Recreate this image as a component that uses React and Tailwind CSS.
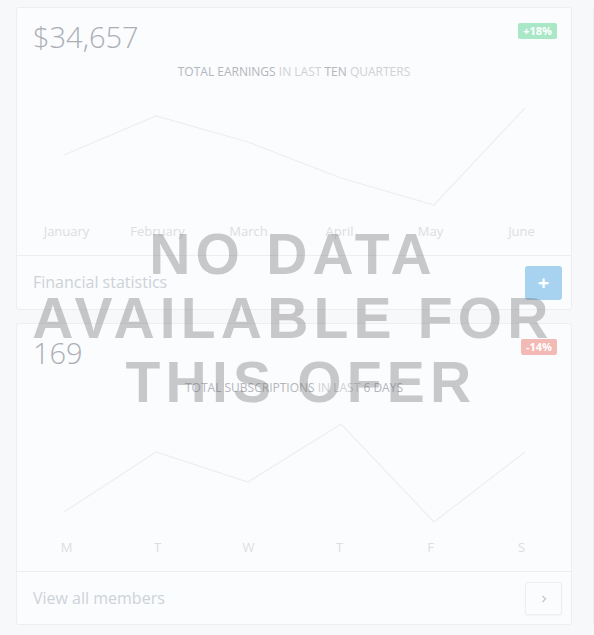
import React from 'react';

const earnings = {
  value: '$34,657',
  badge: '+18%',
  badgeClass: 'bg-[#a9e7c7]',
  labels: ['January', 'February', 'March', 'April', 'May', 'June'],
  points: [75, 36, 62, 98, 125, 28],
};

const subscriptions = {
  value: '169',
  badge: '-14%',
  badgeClass: 'bg-[#f3b9b4]',
  labels: ['M', 'T', 'W', 'T', 'F', 'S'],
  points: [116, 56, 86, 28, 126, 56],
};

const XS = [47, 139, 231, 324, 417, 508];

function LineChart({ points }) {
  const d = points.map((y, i) => `${XS[i]},${y}`).join(' ');
  return (
    <svg width="554" height="141" viewBox="0 0 554 141" className="block">
      <polyline points={d} fill="none" stroke="#eceef0" strokeWidth="1.2" />
    </svg>
  );
}

function StatCard({ data, title, footer, action }) {
  return (
    <div className="w-[556px] shrink-0 rounded-[3px] border border-[#eceef1] bg-[#fbfcfd]">
      {/* value + badge */}
      <div className="flex items-start justify-between pl-4 pr-[14px] pt-[11px]">
        <span className="text-[29px] leading-[35px] font-light text-[#abafb5]">{data.value}</span>
        <span className={`mt-[4px] rounded-[2px] px-[5px] text-[11px] font-bold leading-[16px] text-white ${data.badgeClass}`}>
          {data.badge}
        </span>
      </div>

      <div className="mt-[10px] text-center text-[12px] leading-[16px] uppercase">{title}</div>

      <LineChart points={data.points} />

      <div className="grid grid-cols-6 px-1 pb-[14px] text-center text-[13px] leading-[20px] text-[#dcdee1]">
        {data.labels.map((l, i) => (
          <span key={i}>{l}</span>
        ))}
      </div>

      <div className="flex items-center justify-between border-t border-[#eceef1] pl-4 pr-[9px] pt-[10px] pb-[9px]">
        <span className="-mt-[2px] text-[16px] text-[#cdd2d8]">{footer}</span>
        {action}
      </div>
    </div>
  );
}

export default function App() {
  return (
    <div className="relative h-[635px] w-[594px] overflow-hidden bg-[#f7f8fa] font-['Open_Sans',sans-serif]">
      <div className="flex pl-4 pt-[7px]">
        <div className="flex flex-col gap-[13px]">
          <StatCard
            data={earnings}
            title={
              <>
                <span className="text-[#b3b6bb]">Total earnings</span>{' '}
                <span className="text-[#d0d2d5]">in last</span>{' '}
                <span className="text-[#b3b6bb]">ten</span>{' '}
                <span className="text-[#d0d2d5]">quarters</span>
              </>
            }
            footer="Financial statistics"
            action={
              <button className="flex h-[34px] w-[37px] items-center justify-center rounded-[3px] bg-[#a8d3f0] text-[20px] font-bold leading-none text-white">
                +
              </button>
            }
          />
          <StatCard
            data={subscriptions}
            title={
              <>
                <span className="text-[#b3b6bb]">Total subscriptions</span>{' '}
                <span className="text-[#d0d2d5]">in last</span>{' '}
                <span className="text-[#b3b6bb]">6 days</span>
              </>
            }
            footer="View all members"
            action={
              <button className="flex h-[33px] w-[37px] items-center justify-center rounded-[3px] border border-[#eceef1] bg-[#fbfcfd] shadow-[0_1px_2px_rgba(0,0,0,0.04)]">
                <svg width="8" height="10" viewBox="0 0 8 10">
                  <path d="M2.5 2 L5.5 5 L2.5 8" fill="none" stroke="#c4c7cb" strokeWidth="1.3" />
                </svg>
              </button>
            }
          />
        </div>
        <div className="ml-[21px] h-[619px] w-[300px] shrink-0 rounded-[3px] border border-[#eceef1] bg-[#fbfcfd]" />
      </div>

      {/* overlay */}
      <div className="pointer-events-none absolute inset-0 flex items-center justify-center pr-[8px]">
        <div className="text-center font-['Liberation_Sans',Arial,sans-serif] text-[57px] font-bold uppercase leading-[64px] tracking-[5.2px] text-[rgba(110,110,115,0.37)]">
          <div>No data</div>
          <div>available for</div>
          <div className="pl-[16px]">this ofer</div>
        </div>
      </div>
    </div>
  );
}
